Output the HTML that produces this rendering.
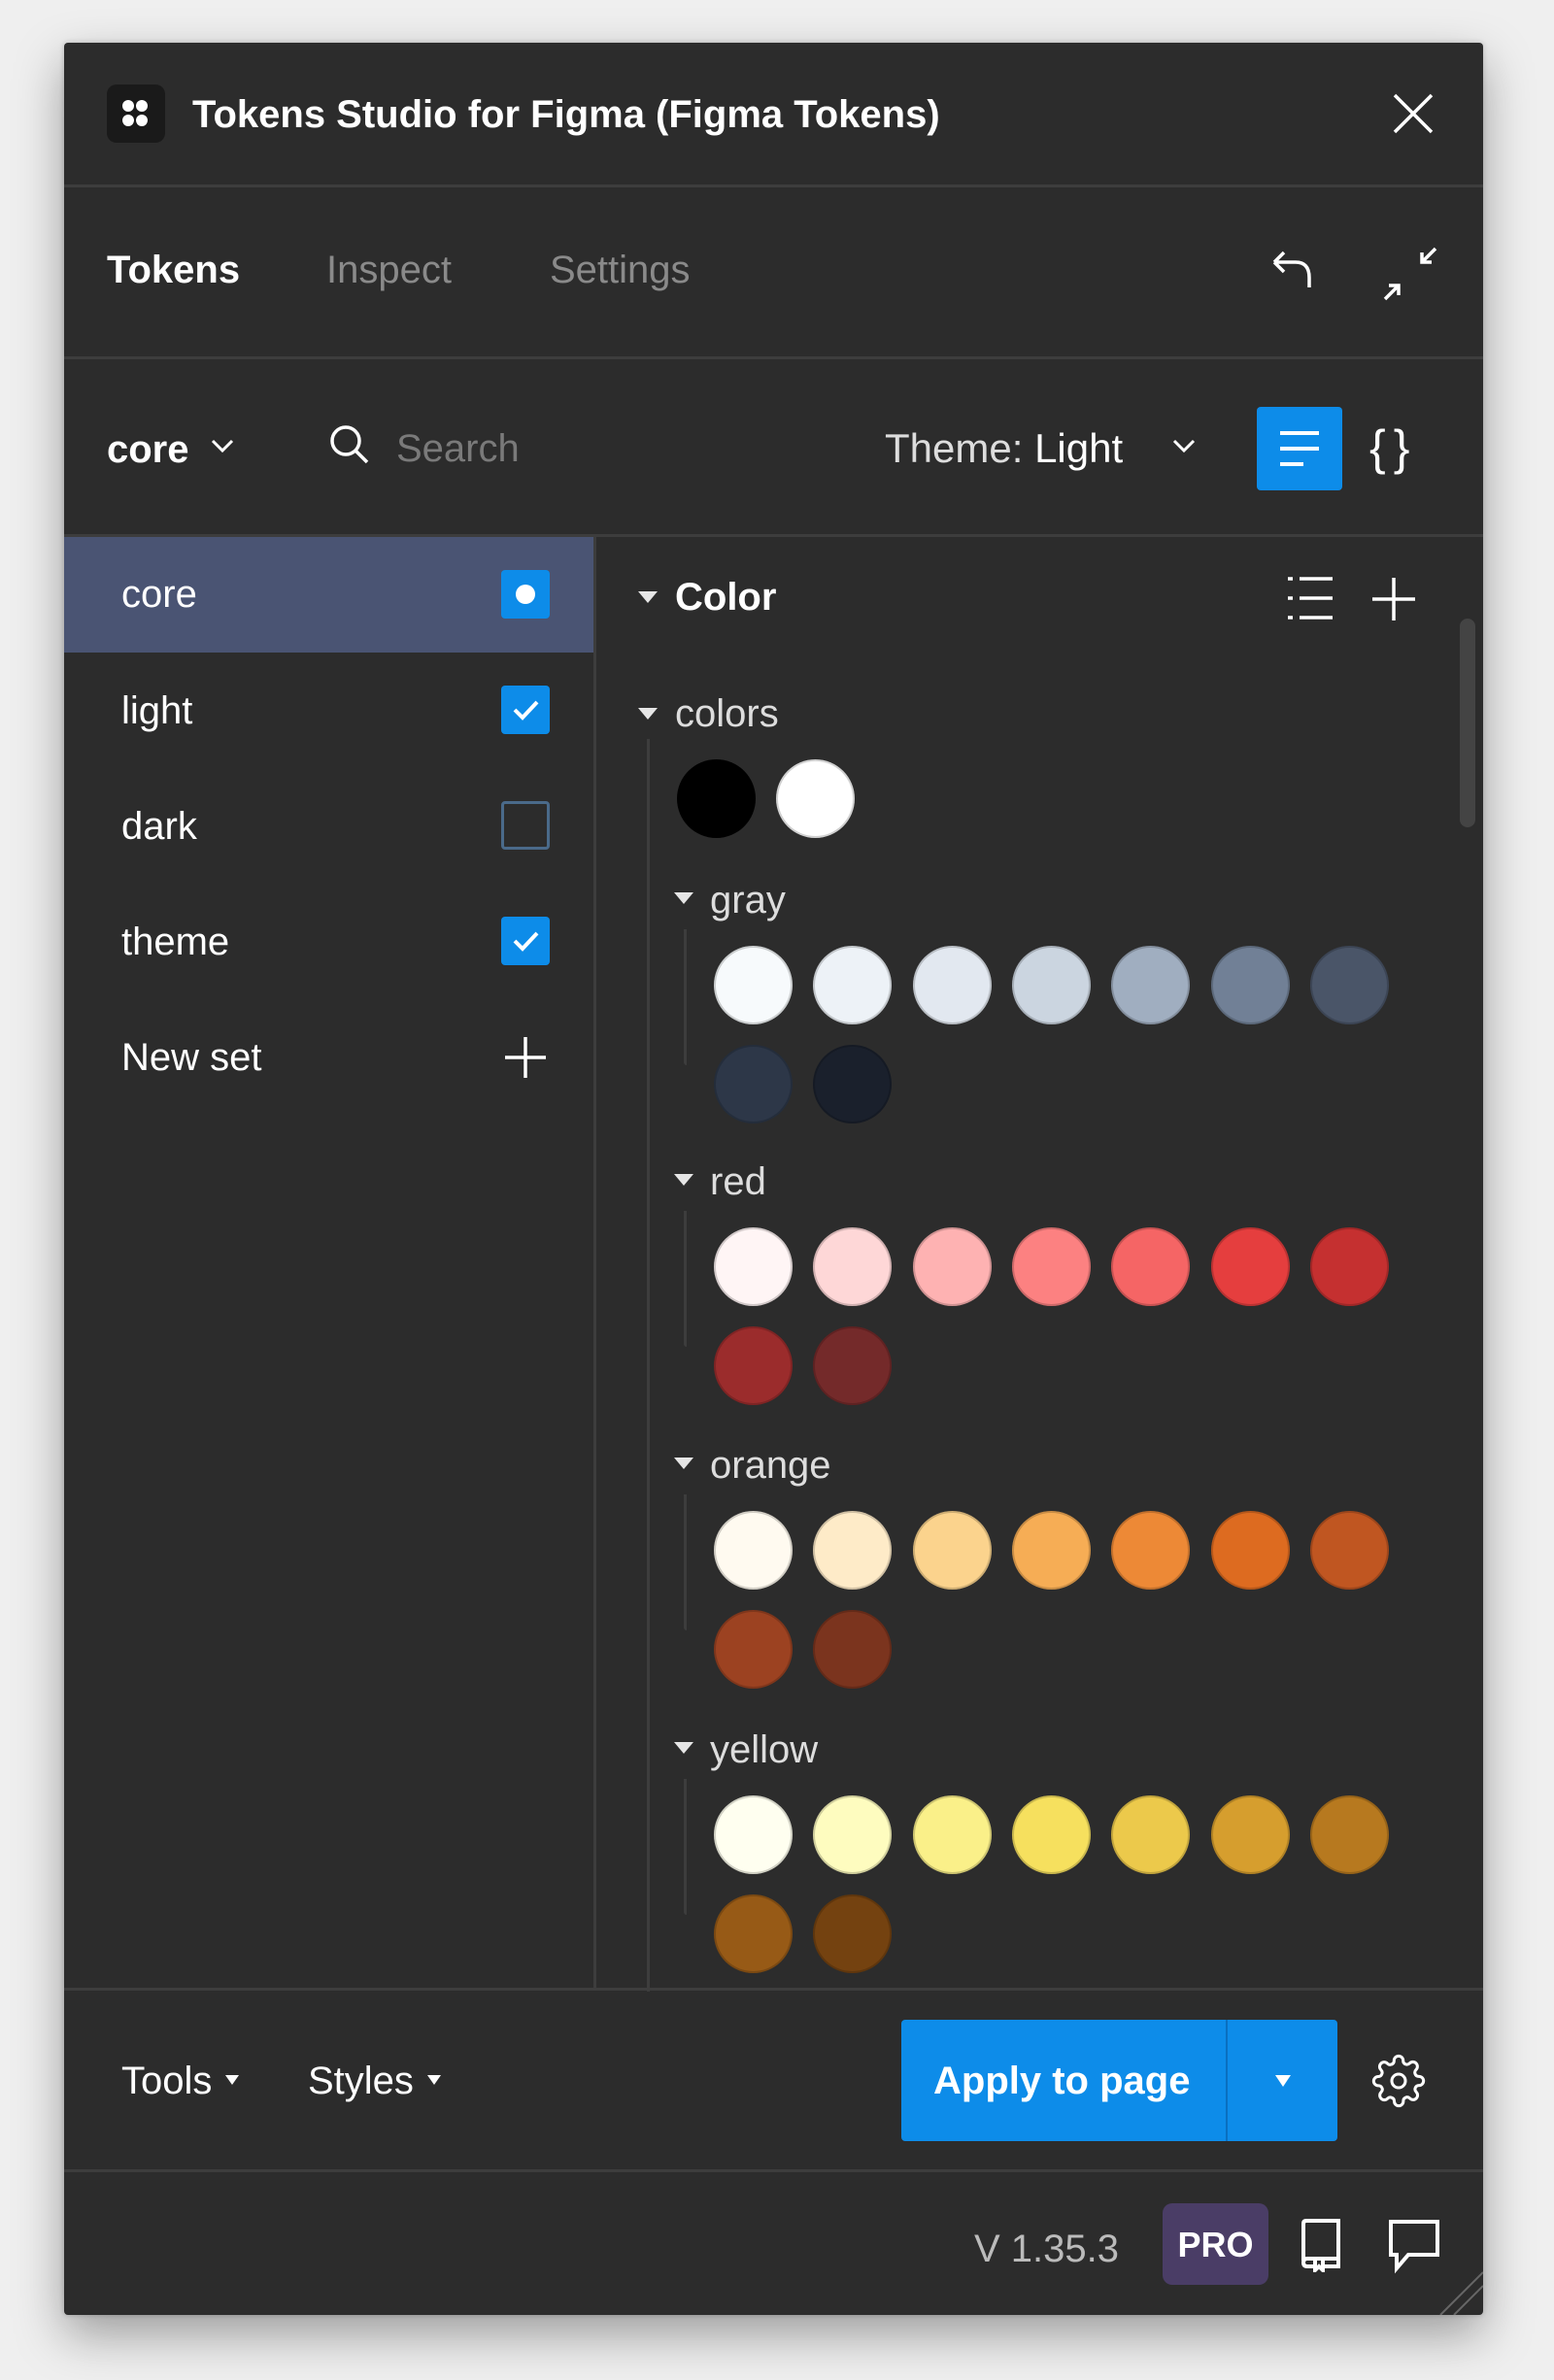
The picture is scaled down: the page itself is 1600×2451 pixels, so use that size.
<!DOCTYPE html>
<html><head><meta charset="utf-8"><style>
*{margin:0;padding:0;box-sizing:border-box}
body{width:1600px;height:2451px;background:#efefef;font-family:"Liberation Sans",sans-serif;position:relative;overflow:hidden}
.win{position:absolute;left:66px;top:44px;width:1461px;height:2340px;background:#2c2c2c;border-radius:4px;box-shadow:0 20px 50px rgba(0,0,0,.35),0 0 6px rgba(0,0,0,.2);overflow:hidden}
.a{position:absolute}
.t{position:absolute;color:#fff;font-size:40px;white-space:nowrap;line-height:1}
.hr{position:absolute;left:0;width:1461px;height:3px;background:#3d3d3d}
.sw{position:absolute;width:81px;height:81px;border-radius:50%;box-shadow:inset 0 0 0 2px rgba(0,0,0,.18)}
.cb{position:absolute;left:450px;width:50px;height:50px;border-radius:4px;background:#0d8ce9}
.tri{position:absolute;width:0;height:0;border-left:10px solid transparent;border-right:10px solid transparent;border-top:12px solid #e6e6e6}
</style></head><body>
<div class="win">
<div class="a" style="left:44px;top:43px;width:60px;height:60px;background:#1a1a1a;border-radius:10px"></div>
<svg class="a" style="left:56px;top:55px" width="36" height="36" viewBox="0 0 36 36" fill="#fff"><circle cx="10" cy="10" r="6"/><circle cx="24" cy="10" r="6"/><circle cx="10" cy="25" r="6"/><circle cx="24" cy="25" r="6"/></svg>
<div class="t" style="left:132px;top:54px;font-weight:bold;font-size:40px">Tokens Studio for Figma (Figma Tokens)</div>
<svg class="a" style="left:1366px;top:50px" width="46" height="46" viewBox="0 0 46 46" stroke="#fff" stroke-width="3.5"><path d="M4 4L42 42M42 4L4 42"/></svg>
<div class="hr" style="top:146px"></div>
<div class="t" style="left:44px;top:214px;font-weight:bold">Tokens</div>
<div class="t" style="left:270px;top:214px;color:#8a8a8a">Inspect</div>
<div class="t" style="left:500px;top:214px;color:#8a8a8a">Settings</div>
<svg class="a" style="left:1240px;top:210px" width="50" height="50" viewBox="0 0 50 50" fill="none" stroke="#fff" stroke-width="3.5"><path d="M6 16L16 6M6 16L16 26M6 16H28Q42 16 42 32V42"/></svg>
<svg class="a" style="left:1356px;top:208px" width="60" height="60" viewBox="0 0 60 60" fill="none" stroke="#fff" stroke-width="3.5"><path d="M56 4L42 18M42 8V18H52M4 56L18 42M8 42H18V52"/></svg>
<div class="hr" style="top:323px"></div>
<div class="t" style="left:44px;top:399px;font-weight:bold">core</div>
<svg class="a" style="left:150px;top:405px" width="26" height="20" viewBox="0 0 26 20" fill="none" stroke="#fff" stroke-width="3"><path d="M3 5L13 15L23 5"/></svg>
<svg class="a" style="left:272px;top:392px" width="44" height="44" viewBox="0 0 44 44" fill="none" stroke="#fff" stroke-width="3.5"><circle cx="18" cy="18" r="14"/><path d="M28 28L40 40"/></svg>
<div class="t" style="left:342px;top:398px;color:#7a7a7a">Search</div>
<div class="t" style="left:845px;top:397px;color:#ddd;font-size:42px">Theme: <span style="color:#fff">Light</span></div>
<svg class="a" style="left:1140px;top:405px" width="26" height="20" viewBox="0 0 26 20" fill="none" stroke="#fff" stroke-width="3"><path d="M3 5L13 15L23 5"/></svg>
<div class="a" style="left:1228px;top:375px;width:88px;height:86px;background:#0d8ce9;border-radius:4px"></div>
<svg class="a" style="left:1248px;top:394px" width="48" height="48" viewBox="0 0 48 48" stroke="#fff" stroke-width="4"><path d="M4 8H44M4 24H44M4 40H28"/></svg>
<div class="t" style="left:1344px;top:392px;font-size:50px;letter-spacing:8px">{}</div>
<div class="hr" style="top:506px"></div>
<div class="a" style="left:0;top:509px;width:545px;height:119px;background:#4a5473"></div>
<div class="a" style="left:545px;top:509px;width:3px;height:1494px;background:#3d3d3d"></div>
<div class="t" style="left:59px;top:548px">core</div>
<div class="cb" style="top:543px"></div><div class="a" style="left:465px;top:558px;width:20px;height:20px;border-radius:50%;background:#fff"></div>
<div class="t" style="left:59px;top:668px">light</div>
<div class="cb" style="top:662px"></div><svg class="a" style="left:450px;top:662px" width="50" height="50" viewBox="0 0 50 50" fill="none" stroke="#fff" stroke-width="4"><path d="M14 25L22 33L37 17"/></svg>
<div class="t" style="left:59px;top:787px">dark</div>
<div class="cb" style="top:781px;background:none;border:3px solid #4a6a8a"></div>
<div class="t" style="left:59px;top:906px">theme</div>
<div class="cb" style="top:900px"></div><svg class="a" style="left:450px;top:900px" width="50" height="50" viewBox="0 0 50 50" fill="none" stroke="#fff" stroke-width="4"><path d="M14 25L22 33L37 17"/></svg>
<div class="t" style="left:59px;top:1025px">New set</div>
<svg class="a" style="left:450px;top:1020px" width="50" height="50" viewBox="0 0 50 50" stroke="#fff" stroke-width="3.5"><path d="M25 4V46M4 25H46"/></svg>
<div class="tri" style="left:591px;top:565px"></div>
<div class="t" style="left:629px;top:551px;font-weight:bold">Color</div>
<svg class="a" style="left:1258px;top:546px" width="50" height="52" viewBox="0 0 50 52" stroke="#fff" stroke-width="3.5"><path d="M14 6H48M14 26H48M14 46H48M2 6H7M2 26H7M2 46H7"/></svg>
<svg class="a" style="left:1344px;top:548px" width="50" height="50" viewBox="0 0 50 50" stroke="#fff" stroke-width="3.5"><path d="M25 3V47M3 25H47"/></svg>
<div class="a" style="left:1437px;top:593px;width:16px;height:215px;border-radius:8px;background:#444"></div>
<div class="tri" style="left:591px;top:685px"></div>
<div class="t" style="left:629px;top:671px;color:#ddd">colors</div>
<div class="a" style="left:600px;top:717px;width:3px;height:1290px;background:#3d3d3d"></div>
<div class="sw" style="left:631px;top:738px;background:#000"></div>
<div class="sw" style="left:733px;top:738px;background:#fff"></div>
<div id="groups"></div>
<div class="hr" style="top:2003px"></div>
<div class="t" style="left:59px;top:2079px">Tools</div><div class="tri" style="left:166px;top:2093px;border-width:10px 7px 0 7px;border-top-color:#fff"></div>
<div class="t" style="left:251px;top:2079px">Styles</div><div class="tri" style="left:374px;top:2093px;border-width:10px 7px 0 7px;border-top-color:#fff"></div>
<div class="a" style="left:862px;top:2036px;width:449px;height:125px;background:#0d8ce9;border-radius:4px"></div>
<div class="a" style="left:1196px;top:2036px;width:2px;height:125px;background:#0a6fc0"></div>
<div class="t" style="left:895px;top:2079px;font-weight:bold">Apply to page</div>
<div class="tri" style="left:1247px;top:2093px;border-width:12px 8px 0 8px;border-top-color:#fff"></div>
<svg class="a" style="left:1346px;top:2071px" width="56" height="56" viewBox="0 0 24 24" fill="none" stroke="#fff" stroke-width="1.3"><circle cx="12" cy="12" r="3"/><path d="M19.4 15a1.65 1.65 0 0 0 .33 1.82l.06.06a2 2 0 1 1-2.830 2.83l-.06-.06a1.65 1.65 0 0 0-1.82-.33 1.65 1.65 0 0 0-1 1.51V21a2 2 0 1 1-4 0v-.09A1.65 1.65 0 0 0 9 19.4a1.65 1.65 0 0 0-1.82.33l-.06.06a2 2 0 1 1-2.83-2.83l.06-.06a1.65 1.65 0 0 0 .33-1.82 1.65 1.65 0 0 0-1.51-1H3a2 2 0 1 1 0-4h.09A1.65 1.65 0 0 0 4.6 9a1.650 1.65 0 0 0-.33-1.82l-.06-.06a2 2 0 1 1 2.83-2.83l.06.06a1.65 1.65 0 0 0 1.82.33H9a1.65 1.65 0 0 0 1-1.51V3a2 2 0 1 1 4 0v.09a1.65 1.65 0 0 0 1 1.51 1.65 1.65 0 0 0 1.82-.33l.06-.06a2 2 0 1 1 2.83 2.83l-.06.06a1.65 1.65 0 0 0-.33 1.82V9a1.65 1.65 0 0 0 1.51 1H21a2 2 0 1 1 0 4h-.09a1.65 1.65 0 0 0-1.51 1z"/></svg>
<div class="hr" style="top:2190px"></div>
<div class="t" style="left:937px;top:2252px;color:#bbb">V 1.35.3</div>
<div class="a" style="left:1131px;top:2225px;width:109px;height:84px;background:#4a3d66;border-radius:10px"></div>
<div class="t" style="left:1131px;top:2250px;width:109px;text-align:center;font-weight:bold;font-size:36px">PRO</div>
<svg class="a" style="left:1268px;top:2240px" width="50" height="56" viewBox="0 0 50 56" fill="none" stroke="#fff" stroke-width="4"><path d="M8 44V6Q8 3 11 3H44V42H12Q8 42 8 46Q8 50 12 50H18M44 42V50H30M20 44V54L24 50L28 54V44"/></svg>
<svg class="a" style="left:1362px;top:2240px" width="56" height="58" viewBox="0 0 56 58" fill="none" stroke="#fff" stroke-width="4"><path d="M4 4H52V38H22L10 52V38H4Z"/></svg>
<svg class="a" style="left:1415px;top:2295px" width="46" height="45" viewBox="0 0 46 45" stroke="#666" stroke-width="2"><path d="M2 45L46 1M16 45L46 15"/></svg>
</div>
<script>
var g=[["gray",927,["#f7fafc","#edf2f7","#e2e8f0","#cbd5e0","#a0aec0","#718096","#4a5568","#2d3748","#1a202c"]],
["red",1217,["#fff5f5","#fed7d7","#feb2b2","#fc8181","#f56565","#e53e3e","#c53030","#9b2c2c","#742a2a"]],
["orange",1509,["#fffaf0","#feebc8","#fbd38d","#f6ad55","#ed8936","#dd6b20","#c05621","#9c4221","#7b341e"]],
["yellow",1802,["#fffff0","#fefcbf","#faf089","#f6e05e","#ecc94b","#d69e2e","#b7791f","#975a16","#744210"]]];
var h="";
g.forEach(function(x){var y=x[1]-44;
h+='<div class="tri" style="left:628px;top:'+(y-8)+'px"></div><div class="t" style="left:665px;top:'+(y-20)+'px;color:#ddd">'+x[0]+'</div>';
h+='<div class="a" style="left:638px;top:'+(y+30)+'px;width:3px;height:140px;background:#3d3d3d;border-radius:0 0 0 10px"></div>';
x[2].forEach(function(c,i){var r=i<7?0:1,k=i<7?i:i-7;
h+='<div class="sw" style="left:'+(669+k*102.3)+'px;top:'+(y+47+r*102)+'px;background:'+c+'"></div>';});});
document.getElementById("groups").outerHTML=h;
</script>
</body></html>
